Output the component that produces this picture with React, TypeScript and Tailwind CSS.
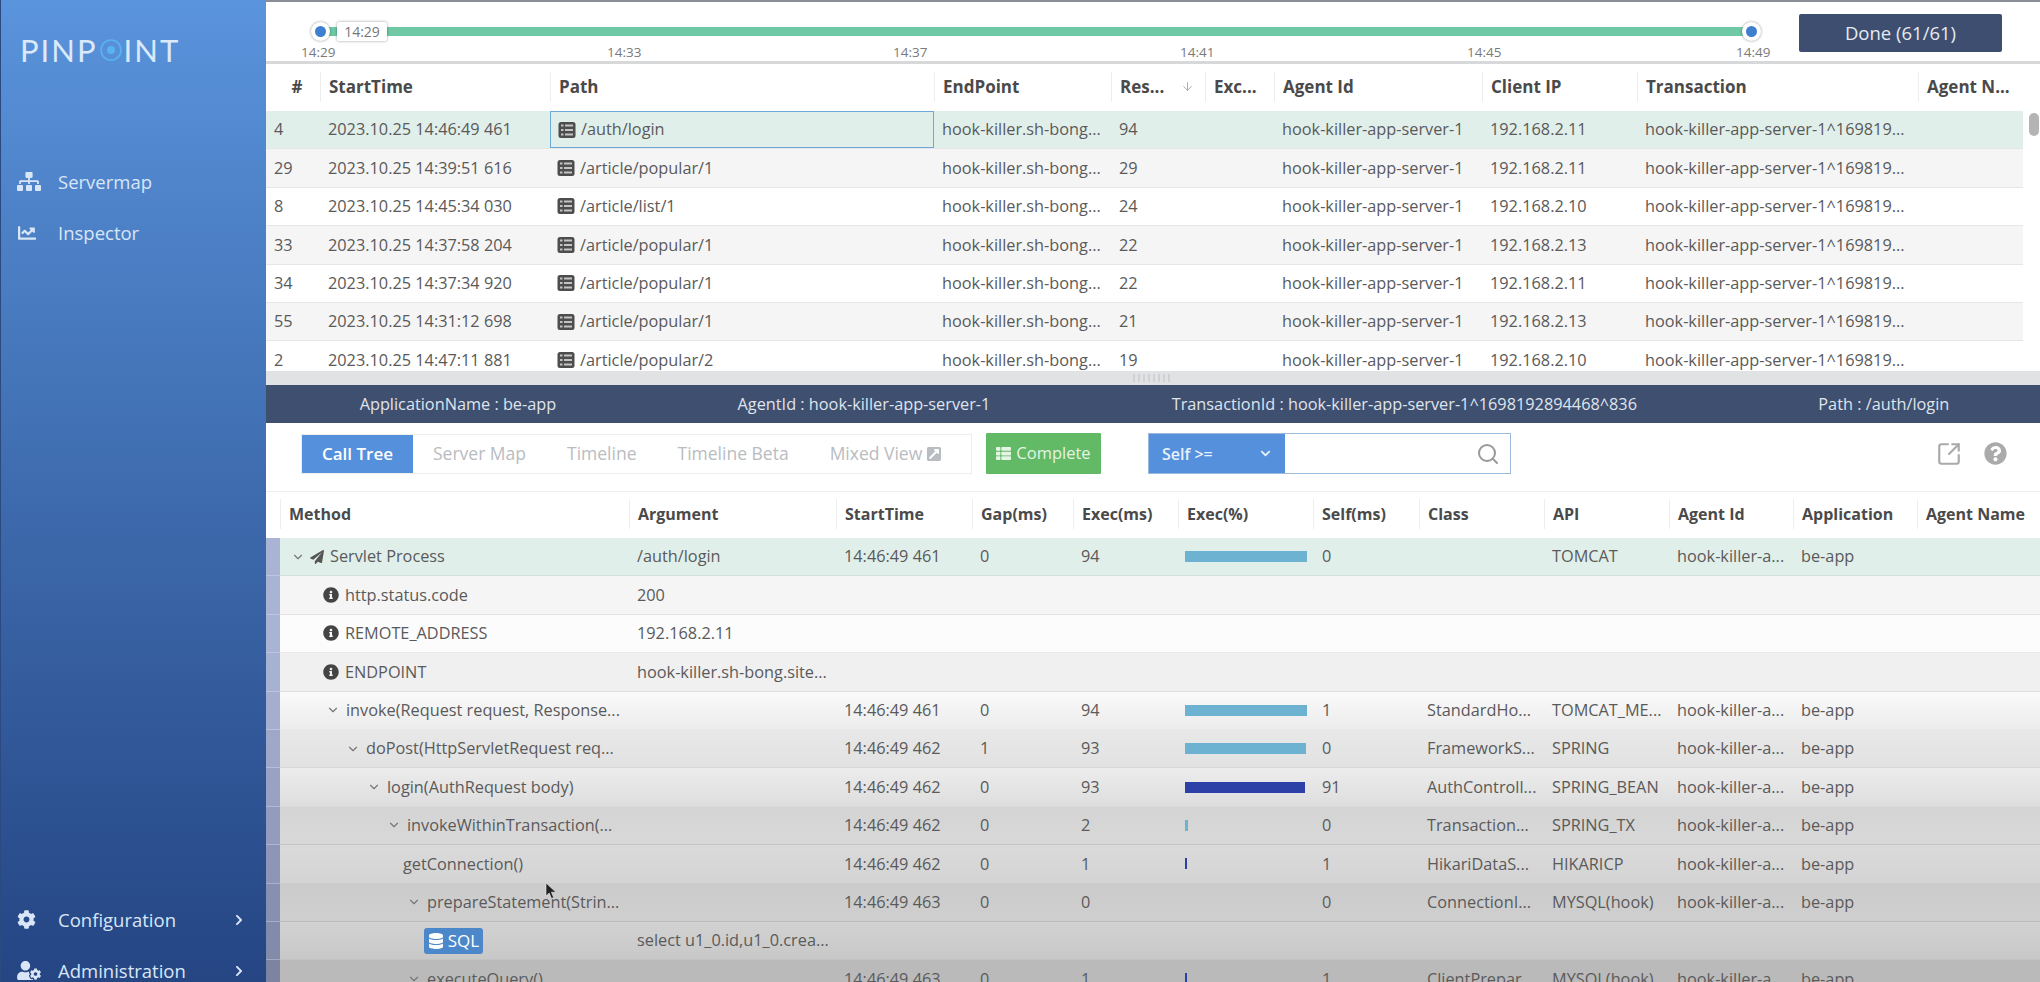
import {
  FaSitemap,
  FaChartLine,
  FaCog,
  FaUserCog,
  FaChevronRight,
  FaChevronDown,
  FaPaperPlane,
  FaInfoCircle,
  FaThList,
  FaDatabase,
  FaExternalLinkSquareAlt,
  FaQuestionCircle,
} from 'react-icons/fa';
import { ChevronDown, Search, SquareArrowOutUpRight, ArrowDown } from 'lucide-react';

const txCols = 'grid-cols-[54px_230px_384px_177px_94px_69px_208px_155px_281px_105px]';
const treeCols = 'grid-cols-[349px_207px_136px_101px_105px_135px_106px_125px_125px_124px_124px_120px]';

const ticks = [
  { label: '14:29', cls: 'w-[341px] pl-[35px]' },
  { label: '14:33', cls: 'w-[286px]' },
  { label: '14:37', cls: 'w-[287px]' },
  { label: '14:41', cls: 'w-[287px]' },
  { label: '14:45', cls: 'w-[269px]' },
  { label: '14:49', cls: '' },
];

const txHeaders = ['#', 'StartTime', 'Path', 'EndPoint', 'Res...', 'Exc...', 'Agent Id', 'Client IP', 'Transaction', 'Agent N...'];

const txRows = [
  { id: '4', time: '2023.10.25 14:46:49 461', path: '/auth/login', res: '94', ip: '192.168.2.11', bg: 'bg-[#e1efeb]' },
  { id: '29', time: '2023.10.25 14:39:51 616', path: '/article/popular/1', res: '29', ip: '192.168.2.11', bg: 'bg-[#f5f5f5]' },
  { id: '8', time: '2023.10.25 14:45:34 030', path: '/article/list/1', res: '24', ip: '192.168.2.10', bg: 'bg-white' },
  { id: '33', time: '2023.10.25 14:37:58 204', path: '/article/popular/1', res: '22', ip: '192.168.2.13', bg: 'bg-[#f5f5f5]' },
  { id: '34', time: '2023.10.25 14:37:34 920', path: '/article/popular/1', res: '22', ip: '192.168.2.11', bg: 'bg-white' },
  { id: '55', time: '2023.10.25 14:31:12 698', path: '/article/popular/1', res: '21', ip: '192.168.2.13', bg: 'bg-[#f5f5f5]' },
  { id: '2', time: '2023.10.25 14:47:11 881', path: '/article/popular/2', res: '19', ip: '192.168.2.10', bg: 'bg-white' },
];

const treeHeaders = ['Method', 'Argument', 'StartTime', 'Gap(ms)', 'Exec(ms)', 'Exec(%)', 'Self(ms)', 'Class', 'API', 'Agent Id', 'Application', 'Agent Name'];

type TreeRow = {
  name: string;
  kind?: 'root' | 'info' | 'sql' | 'plain';
  pad: string;
  arg?: string;
  time?: string;
  gap?: string;
  exec?: string;
  bar?: string;
  self?: string;
  cls?: string;
  api?: string;
  bg: string;
  gutter: string;
};

const treeRows: TreeRow[] = [
  { name: 'Servlet Process', kind: 'root', pad: 'pl-[11px]', arg: '/auth/login', time: '14:46:49 461', gap: '0', exec: '94', bar: 'w-[122px] bg-[#6db3d1]', self: '0', api: 'TOMCAT', bg: 'bg-[#e1efeb]', gutter: 'bg-[#a9b3d4]' },
  { name: 'http.status.code', kind: 'info', pad: 'pl-[43px]', arg: '200', bg: 'bg-[#f5f5f5]', gutter: 'bg-[#a9b3d4]' },
  { name: 'REMOTE_ADDRESS', kind: 'info', pad: 'pl-[43px]', arg: '192.168.2.11', bg: 'bg-[#fcfcfc]', gutter: 'bg-[#a9b3d4]' },
  { name: 'ENDPOINT', kind: 'info', pad: 'pl-[43px]', arg: 'hook-killer.sh-bong.site...', bg: 'bg-[#f0f0f0]', gutter: 'bg-[#a7b1d2]' },
  { name: 'invoke(Request request, Response...', pad: 'pl-[46px]', time: '14:46:49 461', gap: '0', exec: '94', bar: 'w-[122px] bg-[#6db3d1]', self: '1', cls: 'StandardHo...', api: 'TOMCAT_ME...', bg: 'bg-gradient-to-b from-[#fafafa] to-[#ececec]', gutter: 'bg-[#a5aece]' },
  { name: 'doPost(HttpServletRequest req...', pad: 'pl-[66px]', time: '14:46:49 462', gap: '1', exec: '93', bar: 'w-[121px] bg-[#6db3d1]', self: '0', cls: 'FrameworkS...', api: 'SPRING', bg: 'bg-gradient-to-b from-[#e8e8e8] to-[#e2e2e2]', gutter: 'bg-[#9fa8c8]' },
  { name: 'login(AuthRequest body)', pad: 'pl-[87px]', time: '14:46:49 462', gap: '0', exec: '93', bar: 'w-[120px] bg-[#2c40a8]', self: '91', cls: 'AuthControll...', api: 'SPRING_BEAN', bg: 'bg-gradient-to-b from-[#ececec] to-[#dedede]', gutter: 'bg-[#99a2c2]' },
  { name: 'invokeWithinTransaction(...', pad: 'pl-[107px]', time: '14:46:49 462', gap: '0', exec: '2', bar: 'w-[3px] bg-[#6db3d1]', self: '0', cls: 'Transaction...', api: 'SPRING_TX', bg: 'bg-gradient-to-b from-[#d4d4d4] to-[#d8d8d8]', gutter: 'bg-[#939cbc]' },
  { name: 'getConnection()', kind: 'plain', pad: 'pl-[123px]', time: '14:46:49 462', gap: '0', exec: '1', bar: 'w-[2px] bg-[#2c40a8]', self: '1', cls: 'HikariDataS...', api: 'HIKARICP', bg: 'bg-gradient-to-b from-[#dadada] to-[#d4d4d4]', gutter: 'bg-[#8d96b6]' },
  { name: 'prepareStatement(Strin...', pad: 'pl-[127px]', time: '14:46:49 463', gap: '0', exec: '0', self: '0', cls: 'ConnectionI...', api: 'MYSQL(hook)', bg: 'bg-gradient-to-b from-[#cbcbcb] to-[#cfcfcf]', gutter: 'bg-[#8790b0]' },
  { name: 'SQL', kind: 'sql', pad: 'pl-[144px]', arg: 'select u1_0.id,u1_0.crea...', bg: 'bg-gradient-to-b from-[#d2d2d2] to-[#c8c8c8]', gutter: 'bg-[#828baa]' },
  { name: 'executeQuery()', pad: 'pl-[127px]', time: '14:46:49 463', gap: '0', exec: '1', bar: 'w-[2px] bg-[#2c40a8]', self: '1', cls: 'ClientPrepar...', api: 'MYSQL(hook)', bg: 'bg-[#bababa]', gutter: 'bg-[#7c84a2]' },
];

// pinpoint's small "list" glyph in front of each path
function PathIcon() {
  return (
    <svg viewBox="0 0 18 18" className="mr-[5px] h-[18px] w-[18px] shrink-0">
      <rect x="0.5" y="1" width="17" height="16" rx="2.5" fill="#4d4d4d" />
      <path d="M3 4.5h2.5M7 4.5h8M3 9h2.5M7 9h8M3 13.5h2.5M7 13.5h8" stroke="#c4c4c4" strokeWidth="2" />
    </svg>
  );
}

function MethodCell({ row }: { row: TreeRow }) {
  if (row.kind === 'sql') {
    return (
      <div className={`flex items-center ${row.pad}`}>
        <span className="flex h-[26px] w-[59px] items-center justify-center gap-1 rounded-[3px] bg-[#4c87c9] text-[17px] text-white">
          <FaDatabase className="text-[16px]" />
          {row.name}
        </span>
      </div>
    );
  }
  return (
    <div className={`flex items-center whitespace-nowrap ${row.pad}`}>
      {row.kind === 'info' && <FaInfoCircle className="mr-[6px] h-[16px] w-[16px] text-[#444]" />}
      {row.kind === 'root' && (
        <>
          <ChevronDown className="h-[14px] w-[14px] text-[#777]" />
          <FaPaperPlane className="ml-[5px] mr-[6px] h-[14px] w-[14px] text-[#555]" />
        </>
      )}
      {!row.kind && <ChevronDown className="mr-[6px] h-[14px] w-[14px] text-[#777]" />}
      <span>{row.name}</span>
    </div>
  );
}

export default function App() {
  return (
    <div className="flex h-[982px] w-[2040px] overflow-hidden font-['Open_Sans',sans-serif] text-[16.3px] text-[#5a5a5a]">
      <aside className="flex h-full w-[266px] shrink-0 flex-col border-l border-[#2a4a80] bg-gradient-to-b from-[#5a94dc] to-[#254583] text-[18.5px] text-[#d9e6f7]">
        <div className="mt-[35px] flex h-[30px] items-center pl-[19px] font-['Lato',sans-serif] text-[31px] tracking-[2px] text-[#dbe9fa]">
          PINP
          <svg viewBox="0 0 24 24" className="mx-[1px] h-[24px] w-[24px]" fill="none">
            <circle cx="12" cy="12" r="10" stroke="#58b4ee" strokeWidth="1.6" />
            <circle cx="12" cy="12" r="4" fill="#58b4ee" />
          </svg>
          INT
        </div>
        <nav className="mt-[105px] flex flex-col gap-[28px]">
          <div className="flex h-[23px] items-center pl-[16px]">
            <FaSitemap className="h-[21px] w-[24px]" />
            <span className="ml-[17px]">Servermap</span>
          </div>
          <div className="flex h-[23px] items-center pl-[16px]">
            <FaChartLine className="h-[18px] w-[20px]" />
            <span className="ml-[21px]">Inspector</span>
          </div>
        </nav>
        <div className="mt-auto flex flex-col gap-[28px]">
          <div className="flex h-[23px] items-center pl-[16px]">
            <FaCog className="h-[19px] w-[19px]" />
            <span className="ml-[22px]">Configuration</span>
            <FaChevronRight className="ml-auto mr-[21px] h-[12px] w-[12px]" />
          </div>
          <div className="flex h-[23px] items-center pl-[16px]">
            <FaUserCog className="h-[19px] w-[24px]" />
            <span className="ml-[17px]">Administration</span>
            <FaChevronRight className="ml-auto mr-[21px] h-[12px] w-[12px]" />
          </div>
        </div>
      </aside>

      <main className="relative flex min-w-0 flex-1 flex-col bg-white">
        {/* timeline */}
        <section className="flex h-[64px] shrink-0 border-t-2 border-b-[3px] border-t-[#8a8d96] border-b-[#d6d8da]">
          <div className="w-[1533px] shrink-0">
            <div className="relative ml-[54px] mt-[25px] h-[9px] w-[1432px] bg-[#6ec9a4]">
              <span className="absolute left-[-9px] top-[-5px] h-[19px] w-[19px] rounded-full border-[4px] border-white bg-[#3f7fd0] shadow-[0_0_3px_rgba(0,0,0,0.4)]" />
              <span className="absolute left-[17px] top-[-5px] flex h-[19px] w-[50px] items-center justify-center rounded-[2px] bg-white text-[14px] text-[#777] shadow-[0_0_3px_rgba(0,0,0,0.4)]">
                14:29
              </span>
              <span className="absolute right-[-9px] top-[-5px] h-[19px] w-[19px] rounded-full border-[4px] border-white bg-[#3f7fd0] shadow-[0_0_3px_rgba(0,0,0,0.4)]" />
            </div>
            <div className="mt-[7px] flex text-[13.5px] leading-[18px] text-[#7a7a7a]">
              {ticks.map((t) => (
                <span key={t.label} className={t.cls}>
                  {t.label}
                </span>
              ))}
            </div>
          </div>
          <button className="mt-[12px] h-[38px] w-[203px] rounded-[2px] bg-[#3e4e70] text-[18.5px] text-[#e6eaf0]">Done (61/61)</button>
        </section>

        {/* transaction list */}
        <section className="relative h-[307px] shrink-0 overflow-hidden">
          <div className={`grid h-[45px] w-[1757px] items-center ${txCols} font-bold text-[17px] text-[#4a4a4a]`}>
            {txHeaders.map((h, i) => (
              <div key={h} className={`flex h-[30px] items-center whitespace-nowrap pl-[8px] ${i > 0 ? 'border-l border-[#eeeeee]' : 'justify-center pl-0'}`}>
                {h}
                {h === 'Res...' && <ArrowDown className="ml-auto mr-[11px] h-[13px] w-[13px] text-[#999]" strokeWidth={1.5} />}
              </div>
            ))}
          </div>
          <div className="h-[2px]" />
          {txRows.map((r, i) => (
            <div key={r.id} className={`grid h-[38.4px] w-[1757px] items-center whitespace-nowrap border-b border-[#e6e6e6] ${txCols} ${r.bg}`}>
              <div className="pl-[8px]">{r.id}</div>
              <div className="pl-[8px]">{r.time}</div>
              <div className={`flex h-full items-center pl-[7px] ${i === 0 ? 'border border-[#6ea8d8]' : ''}`}>
                <PathIcon />
                {r.path}
              </div>
              <div className="pl-[8px]">hook-killer.sh-bong...</div>
              <div className="pl-[8px]">{r.res}</div>
              <div />
              <div className="pl-[8px]">hook-killer-app-server-1</div>
              <div className="pl-[8px]">{r.ip}</div>
              <div className="pl-[8px]">hook-killer-app-server-1^169819...</div>
              <div />
            </div>
          ))}
          <div className="absolute right-[1px] top-[49px] h-[23px] w-[10px] rounded-full bg-[#b4b4b4]" />
        </section>

        {/* splitter */}
        <div className="flex h-[14px] shrink-0 items-center justify-center bg-[#e0e2e4]">
          <span className="h-[8px] w-[40px] bg-[repeating-linear-gradient(90deg,#cfd1d4_0,#cfd1d4_2px,transparent_2px,transparent_5px)]" />
        </div>

        {/* selected transaction */}
        <div className="flex h-[38px] shrink-0 items-center justify-around bg-[#3f4f70] pl-[3px] text-[#dfe4ec]">
          <span>ApplicationName : be-app</span>
          <span>AgentId : hook-killer-app-server-1</span>
          <span>TransactionId : hook-killer-app-server-1^1698192894468^836</span>
          <span>Path : /auth/login</span>
        </div>

        {/* toolbar */}
        <div className="flex h-[69px] shrink-0 items-center border-b border-[#eeeeee] pl-[35px] pb-[7px]">
          <div className="flex h-[40px] w-[671px] items-center border border-[#eeeeee] text-[17.5px] text-[#b9bcc0]">
            <span className="flex h-full w-[111px] items-center justify-center bg-[#5590dc] text-[17px] font-semibold text-white">Call Tree</span>
            <span className="ml-[20px]">Server Map</span>
            <span className="ml-[41px]">Timeline</span>
            <span className="ml-[41px]">Timeline Beta</span>
            <span className="ml-[41px]">Mixed View</span>
            <FaExternalLinkSquareAlt className="ml-[4px] h-[16px] w-[16px]" />
          </div>
          <button className="ml-[14px] flex h-[41px] w-[115px] items-center justify-center gap-[5px] rounded-[1px] bg-[#62b966] text-[16.5px] text-[#e5f4e5]">
            <FaThList className="h-[15px] w-[15px]" />
            Complete
          </button>
          <div className="ml-[47px] flex h-[41px] w-[363px] items-center border border-[#9db9dc]">
            <span className="flex h-full w-[136px] items-center justify-between bg-[#5590dc] pl-[13px] pr-[14px] text-[16px] font-semibold text-[#e8f0fa]">
              Self &gt;=
              <FaChevronDown className="h-[11px] w-[11px]" />
            </span>
            <Search className="ml-auto mr-[10px] h-[24px] w-[24px] text-[#999]" />
          </div>
          <SquareArrowOutUpRight className="ml-[425px] h-[26px] w-[26px] text-[#aaaaaa]" />
          <FaQuestionCircle className="ml-[22px] h-[23px] w-[23px] text-[#aaaaaa]" />
        </div>

        {/* call tree */}
        <div className="h-[44px] shrink-0 pl-[14px]">
          <div className={`grid h-full items-center ${treeCols} text-[16px] font-bold text-[#4a4a4a]`}>
            {treeHeaders.map((h) => (
              <div key={h} className="flex h-[30px] items-center whitespace-nowrap border-l border-[#eeeeee] pl-[8px]">
                {h}
              </div>
            ))}
          </div>
        </div>
        <div className="h-[2px] shrink-0" />
        {treeRows.map((r) => (
          <div key={r.name} className="flex h-[38.4px] shrink-0">
            <div className={`w-[14px] shrink-0 border-b border-[#ffffff40] ${r.gutter}`} />
            <div className={`grid flex-1 items-center whitespace-nowrap border-b border-[#00000012] ${treeCols} ${r.bg}`}>
              <MethodCell row={r} />
              <div className="pl-[8px]">{r.arg}</div>
              <div className="pl-[8px]">{r.time}</div>
              <div className="pl-[8px]">{r.gap}</div>
              <div className="pl-[8px]">{r.exec}</div>
              <div className="pl-[7px]">{r.bar && <div className={`h-[11px] ${r.bar}`} />}</div>
              <div className="pl-[9px]">{r.self}</div>
              <div className="pl-[8px]">{r.cls}</div>
              <div className="pl-[8px]">{r.api}</div>
              <div className="pl-[8px]">{r.time ? 'hook-killer-a...' : ''}</div>
              <div className="pl-[8px]">{r.time ? 'be-app' : ''}</div>
              <div />
            </div>
          </div>
        ))}

        {/* mouse pointer from the recording */}
        <svg viewBox="0 0 12 18" className="absolute left-[279px] top-[882px] h-[18px] w-[12px]">
          <path d="M1 1v13l3.2-3 2.3 5.5 2.2-1-2.3-5.3H11z" fill="#222" stroke="#eee" strokeWidth="0.6" />
        </svg>
      </main>
    </div>
  );
}
